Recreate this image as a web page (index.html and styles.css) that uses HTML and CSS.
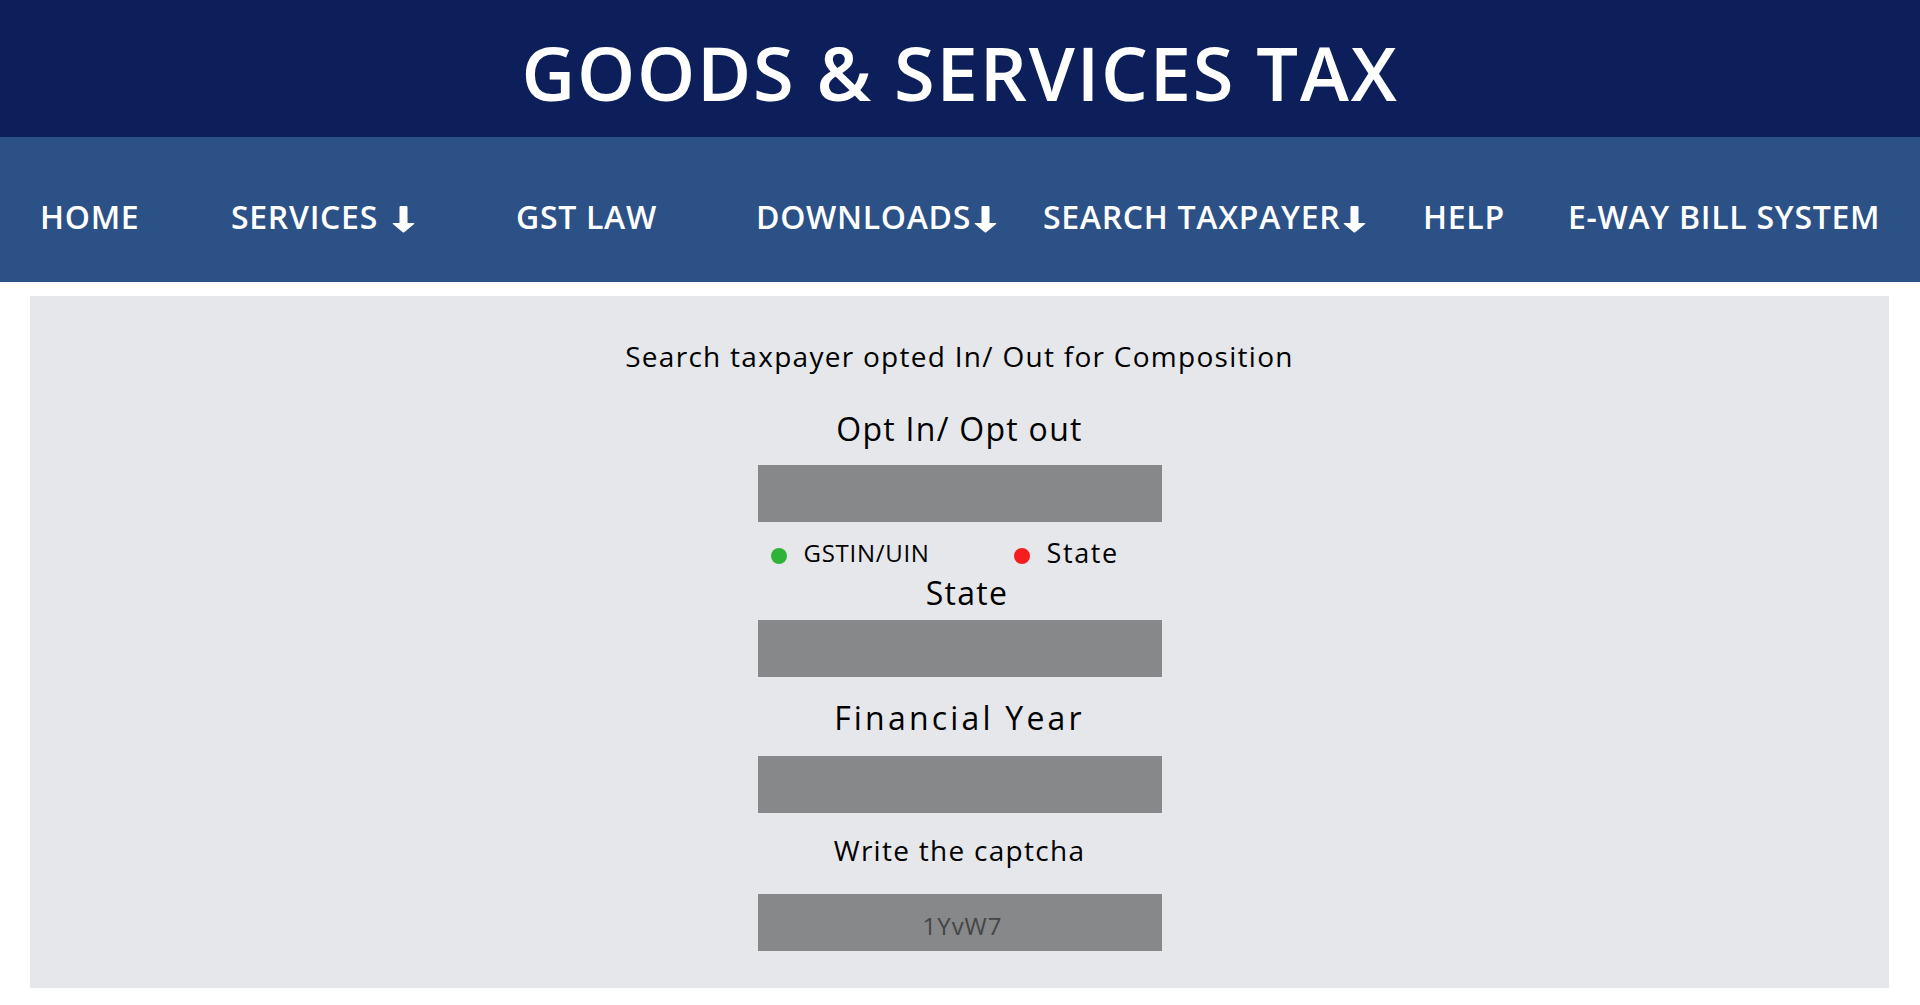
FILE: index.html
```html
<!DOCTYPE html>
<html lang="en">
<head>
<meta charset="utf-8">
<title>Goods &amp; Services Tax</title>
<link rel="stylesheet" href="styles.css">
</head>
<body>
<header class="masthead">
  <h1 class="masthead-title">GOODS &amp; SERVICES TAX</h1>
</header>
<nav class="mainnav">
  <a class="nav-item" href="#">HOME</a>
  <a class="nav-item" href="#">SERVICES<svg class="nav-arrow nav-arrow-spaced" viewBox="0 0 23 27" aria-hidden="true"><path d="M7.5 1.2 Q7.5 0 8.7 0 H14.3 Q15.5 0 15.5 1.2 V17 H21.6 Q23 17 22.1 18.1 L12.3 26.2 Q11.5 26.9 10.7 26.2 L0.9 18.1 Q0 17 1.4 17 H7.5 Z" fill="#fff"/></svg></a>
  <a class="nav-item" href="#">GST LAW</a>
  <a class="nav-item" href="#">DOWNLOADS<svg class="nav-arrow" viewBox="0 0 23 27" aria-hidden="true"><path d="M7.5 1.2 Q7.5 0 8.7 0 H14.3 Q15.5 0 15.5 1.2 V17 H21.6 Q23 17 22.1 18.1 L12.3 26.2 Q11.5 26.9 10.7 26.2 L0.9 18.1 Q0 17 1.4 17 H7.5 Z" fill="#fff"/></svg></a>
  <a class="nav-item" href="#">SEARCH TAXPAYER<svg class="nav-arrow" viewBox="0 0 23 27" aria-hidden="true"><path d="M7.5 1.2 Q7.5 0 8.7 0 H14.3 Q15.5 0 15.5 1.2 V17 H21.6 Q23 17 22.1 18.1 L12.3 26.2 Q11.5 26.9 10.7 26.2 L0.9 18.1 Q0 17 1.4 17 H7.5 Z" fill="#fff"/></svg></a>
  <a class="nav-item" href="#">HELP</a>
  <a class="nav-item" href="#">E-WAY BILL SYSTEM</a>
</nav>
<main class="panel">
  <p class="panel-title">Search taxpayer opted In/ Out for Composition</p>
  <p class="field-label label-opt">Opt In/ Opt out</p>
  <div class="field field-first"></div>
  <div class="choice-row">
    <span class="choice"><span class="dot dot-green"></span><span class="choice-text choice-small">GSTIN/UIN</span></span>
    <span class="choice"><span class="dot dot-red"></span><span class="choice-text">State</span></span>
  </div>
  <p class="field-label label-state">State</p>
  <div class="field field-state"></div>
  <p class="field-label label-year">Financial Year</p>
  <div class="field field-year"></div>
  <p class="panel-title label-captcha">Write the captcha</p>
  <div class="field field-captcha">1YvW7</div>
</main>
</body>
</html>
```
FILE: styles.css
```css
* { box-sizing: border-box; }
html, body { margin: 0; padding: 0; background: #fff; }
body {
  font-family: "Open Sans", "Liberation Sans", sans-serif;
  color: #000;
}
.masthead {
  background: #0c1f5b;
  height: 137px;
  padding-top: 8px;
}
.masthead-title {
  margin: 0;
  text-align: center;
  color: #fff;
  font-size: 74px;
  font-weight: 600;
  letter-spacing: 1.8px;
  line-height: 129px;
}
.mainnav {
  background: #2c5187;
  height: 145px;
  padding-top: 14px;
  padding-left: 40px;
  display: grid;
  grid-template-columns: 191px 285px 240px 287px 380px 145px auto;
}
.nav-item {
  color: #fff;
  text-decoration: none;
  font-size: 32px;
  font-weight: 600;
  letter-spacing: 0.7px;
  line-height: 131px;
  white-space: nowrap;
}
.nav-arrow {
  width: 23px;
  height: 27px;
  margin-left: 3px;
  vertical-align: -4px;
}
.nav-arrow-spaced { margin-left: 14px; }
.panel {
  background: #e5e7ea;
  margin: 14px 31px 0 30px;
  padding: 40px 0 37px;
  display: flex;
  flex-direction: column;
  align-items: center;
  letter-spacing: 0.08em;
}
.panel-title {
  margin: 0;
  font-size: 28px;
  line-height: 40px;
}
.field-label {
  margin: 0;
  font-size: 32px;
  line-height: 44px;
}
.label-opt { margin-top: 31px; }
.field {
  width: 404px;
  height: 57px;
  background: #878889;
}
.field-first { margin-top: 14px; }
.choice-row {
  width: 404px;
  margin-top: 13px;
  padding-left: 13px;
  display: grid;
  grid-template-columns: 243px auto;
  line-height: 36px;
}
.choice {
  display: flex;
  align-items: center;
  gap: 17px;
}
.dot {
  width: 16px;
  height: 16px;
  border-radius: 50%;
  margin-top: 6px;
  flex: none;
}
.dot-green { background: #2db336; }
.dot-red { background: #f51d1d; }
.choice-text { font-size: 27px; letter-spacing: 0.06em; }
.choice-small { font-size: 24px; letter-spacing: 0.03em; }
.label-state { margin-top: 2px; line-height: 40px; padding-left: 15px; }
.field-state { margin-top: 7px; }
.label-year { margin-top: 19px; letter-spacing: 0.1em; }
.field-year { margin-top: 16px; }
.label-captcha { margin-top: 17px; }
.field-captcha {
  margin-top: 24px;
  padding-top: 6px;
  padding-left: 6px;
  text-align: center;
  font-size: 24px;
  line-height: 51px;
  color: #454545;
  letter-spacing: 0.04em;
}
```
